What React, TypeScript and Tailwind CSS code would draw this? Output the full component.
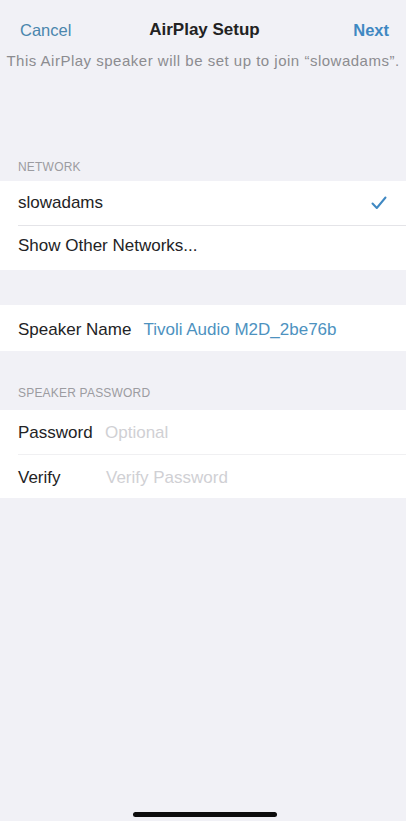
export default function App() {
  return (
    <div className="relative min-h-[821px] bg-[#f1f1f6] pt-[8px] font-['Liberation_Sans',Arial,sans-serif] text-[#232325]">
      {/* Nav bar */}
      <div className="flex h-[44px] items-center justify-between pl-5 pr-[17px] text-[16.5px]">
        <span className="w-[80px] text-[#4a86ad]">Cancel</span>
        <span className="text-[17px] font-bold text-[#222]">AirPlay Setup</span>
        <span className="w-[80px] text-right font-bold text-[#3f88c2]">Next</span>
      </div>

      <p className="text-center text-[15px] leading-[18px] tracking-[0.5px] text-[#8c8c90]">
        This AirPlay speaker will be set up to join “slowadams”.
      </p>

      {/* Network */}
      <div className="px-[18px] pb-[6px] pt-[89px] text-[12px] leading-[16px] tracking-[0.2px] text-[#9c9ca1]">
        NETWORK
      </div>
      <div className="bg-white text-[17px]">
        <div className="flex h-[44px] items-center justify-between pl-[18px] pr-[19px]">
          <span>slowadams</span>
          <svg width="16" height="14" viewBox="0 0 16 14" fill="none">
            <path d="M1.5 7.5 L5.8 12 L14.5 1.5" stroke="#3f88c2" strokeWidth="2" strokeLinecap="round" strokeLinejoin="round" />
          </svg>
        </div>
        <div className="ml-[18px] h-px bg-[#e4e4e8]" />
        <div className="flex h-[44px] items-center pb-[4px] pl-[18px]">Show Other Networks...</div>
      </div>

      {/* Speaker name */}
      <div className="mt-[35px] flex h-[46px] items-center gap-[12px] bg-white pl-[18px] pt-[4px] text-[17px]">
        <span>Speaker Name</span>
        <span className="text-[#4d92bf]">Tivoli Audio M2D_2be76b</span>
      </div>

      {/* Password */}
      <div className="px-[18px] pb-[9px] pt-[34px] text-[12px] leading-[16px] tracking-[0.2px] text-[#9c9ca1]">
        SPEAKER PASSWORD
      </div>
      <div className="bg-white text-[17px]">
        <div className="flex h-[44px] items-center pl-[18px] pt-[2px]">
          <span className="w-[87px]">Password</span>
          <span className="text-[#d0d0d4]">Optional</span>
        </div>
        <div className="ml-[18px] h-px bg-[#f0f0f2]" />
        <div className="flex h-[43px] items-center pl-[18px] pt-[2px]">
          <span className="w-[88px]">Verify</span>
          <span className="text-[#d0d0d4]">Verify Password</span>
        </div>
      </div>

      {/* Home indicator */}
      <div className="absolute bottom-[4px] left-[133px] h-[5px] w-[144px] rounded-full bg-[#0d0d0d]" />
    </div>
  );
}
